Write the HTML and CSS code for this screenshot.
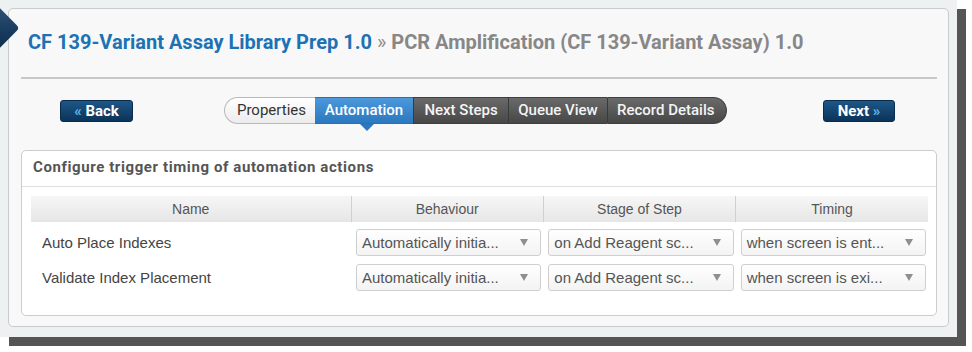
FILE: index.html
```html
<!DOCTYPE html>
<html>
<head>
<meta charset="utf-8">
<link rel="stylesheet" href="styles.css">
</head>
<body>
<div class="frame">
  <div class="ribbon"></div>
  <div class="card">
    <h1 class="title"><span class="crumb">CF 139-Variant Assay Library Prep 1.0</span> <span class="sep">»</span> <span class="current">PCR Amplification (CF 139-Variant Assay) 1.0</span></h1>
    <div class="rule"></div>
    <div class="nav">
      <button class="navbtn back"><span class="chev">«</span> Back</button>
      <div class="tabs">
        <span class="tab light">Properties</span>
        <span class="tab active">Automation</span>
        <span class="tab dark">Next Steps</span>
        <span class="tab dark">Queue View</span>
        <span class="tab dark last">Record Details</span>
      </div>
      <button class="navbtn next">Next <span class="chev">»</span></button>
    </div>
    <div class="panel">
      <div class="panel-head">Configure trigger timing of automation actions</div>
      <table class="grid">
        <colgroup><col class="col-name"><col><col><col></colgroup>
        <thead>
          <tr><th class="c-name">Name</th><th>Behaviour</th><th>Stage of Step</th><th>Timing</th></tr>
        </thead>
        <tbody>
          <tr>
            <td class="name">Auto Place Indexes</td>
            <td><div class="sel"><span>Automatically initia...</span><i class="arr"></i></div></td>
            <td><div class="sel"><span>on Add Reagent sc...</span><i class="arr"></i></div></td>
            <td><div class="sel"><span>when screen is ent...</span><i class="arr"></i></div></td>
          </tr>
          <tr>
            <td class="name">Validate Index Placement</td>
            <td><div class="sel"><span>Automatically initia...</span><i class="arr"></i></div></td>
            <td><div class="sel"><span>on Add Reagent sc...</span><i class="arr"></i></div></td>
            <td><div class="sel"><span>when screen is exi...</span><i class="arr"></i></div></td>
          </tr>
        </tbody>
      </table>
    </div>
  </div>
</div>
</body>
</html>
```
FILE: styles.css
```css
html, body {
  margin: 0;
  padding: 0;
  background: #ffffff;
}
body {
  width: 972px;
  height: 352px;
  overflow: hidden;
}
.frame {
  position: relative;
  width: 957px;
  height: 337px;
  background: #eef1f2;
  box-shadow: 9px 9px 0 #555555;
  padding-top: 8px;
  box-sizing: border-box;
}
.ribbon {
  position: absolute;
  left: -19px;
  top: 12px;
  width: 32px;
  height: 32px;
  transform: rotate(45deg);
  border-radius: 4px;
  background: linear-gradient(135deg, #2f5377 0%, #173a5e 60%, #102d4b 100%);
  z-index: 2;
}
.card {
  margin: 0 8px 0 8px;
  height: 319px;
  box-sizing: border-box;
  border: 1px solid #c9cbcc;
  border-radius: 5px;
  background: #f8f8f8;
  padding: 0 11px 0 12px;
}
.title {
  margin: 21px 0 0 7px;
  font-family: Roboto, "Liberation Sans", sans-serif;
  font-weight: 700;
  font-size: 20px;
  line-height: 24px;
  white-space: nowrap;
}
.crumb { color: #1c72b4; }
.sep { color: #8d8d8d; font-weight: 400; }
.current { color: #878787; }
.rule {
  margin-top: 23px;
  height: 2px;
  background: #c8c8c8;
}
.nav {
  margin-top: 18px;
  height: 27px;
  display: flex;
  align-items: center;
  font-family: Roboto, "Liberation Sans", sans-serif;
}
.navbtn {
  height: 22px;
  box-sizing: border-box;
  border: 1px solid #0a2b4a;
  border-radius: 3px;
  background: linear-gradient(#1d5688, #0b3459);
  color: #ffffff;
  font-family: Roboto, "Liberation Sans", sans-serif;
  font-weight: 700;
  font-size: 15px;
  line-height: 18px;
  padding: 0;
  text-align: center;
}
.navbtn .chev { color: #62b6ec; }
.back { width: 73px; margin-left: 39px; }
.next { width: 72px; margin-left: 96px; }
.tabs {
  display: flex;
  margin-left: 91px;
  height: 27px;
}
.tab {
  position: relative;
  box-sizing: border-box;
  height: 27px;
  line-height: 25px;
  font-size: 15px;
  font-weight: 500;
  padding: 0 9px;
  border-top: 1px solid #3f3f3f;
  border-bottom: 1px solid #3f3f3f;
  white-space: nowrap;
}
.tab.light {
  width: 91px;
  color: #333333;
  font-weight: 400;
  background: linear-gradient(#ffffff, #ececec);
  border: 1px solid #b9b9b9;
  border-right: none;
  border-radius: 14px 0 0 14px;
  text-align: right;
}
.tab.active {
  width: 98px;
  color: #ffffff;
  background: linear-gradient(#4b98db, #2b78bf);
  border-color: #2a70b0;
  text-align: center;
}
.tab.active::after {
  content: "";
  position: absolute;
  left: 45px;
  bottom: -8px;
  border-left: 7px solid transparent;
  border-right: 7px solid transparent;
  border-top: 7px solid #2b78bf;
}
.tab.dark {
  color: #f4f4f4;
  background: linear-gradient(#6a6a6a, #474747);
  border-left: 1px solid #3a3a3a;
  text-align: center;
}
.tab.dark:nth-child(3) { width: 95px; }
.tab.dark:nth-child(4) { width: 99px; }
.tab.last {
  width: 120px;
  border-right: 1px solid #3f3f3f;
  border-radius: 0 14px 14px 0;
  text-align: left;
}
.panel {
  margin-top: 26px;
  height: 166px;
  box-sizing: border-box;
  border: 1px solid #cccccc;
  border-radius: 5px;
  background: #ffffff;
}
.panel-head {
  height: 35px;
  border-bottom: 1px solid #dddddd;
  padding-left: 11px;
  font-family: Roboto, "Liberation Sans", sans-serif;
  font-weight: 700;
  font-size: 15px;
  letter-spacing: 0.6px;
  line-height: 32px;
  color: #555555;
}
.grid {
  margin: 9px 0 0 9px;
  width: 897px;
  border-collapse: collapse;
  table-layout: fixed;
  font-family: "Liberation Sans", Arial, sans-serif;
  font-size: 15px;
}
.col-name { width: 320px; }
.grid th {
  height: 26px;
  padding: 0;
  background: linear-gradient(#f6f6f6, #e6e6e6);
  color: #555555;
  font-weight: 400;
  font-size: 14px;
  border-left: 1px solid #d0d0d0;
}
.grid th.c-name { border-left: none; }
.grid td {
  height: 35px;
  padding: 7px 2px 1px 5px;
  box-sizing: border-box;
  vertical-align: top;
}
.grid td.name {
  padding: 7px 0 1px 11px;
  line-height: 27px;
  color: #444444;
  font-size: 15px;
}
.sel {
  height: 27px;
  box-sizing: border-box;
  border: 1px solid #cfcfcf;
  border-radius: 3px;
  background: linear-gradient(#ffffff, #f3f3f3);
  display: flex;
  align-items: center;
  justify-content: space-between;
  padding: 0 12px 0 5px;
  color: #555555;
  font-size: 15px;
  white-space: nowrap;
}
.arr {
  width: 0;
  height: 0;
  border-left: 4px solid transparent;
  border-right: 4px solid transparent;
  border-top: 7px solid #8f8f8f;
}
```
